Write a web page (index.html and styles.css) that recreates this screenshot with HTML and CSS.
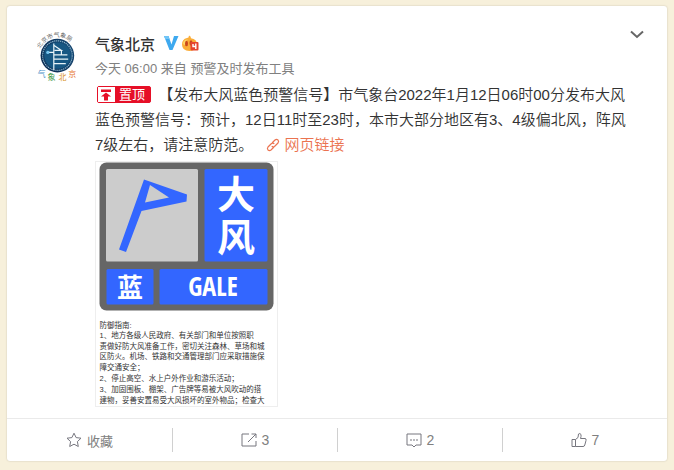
FILE: index.html
```html
<!DOCTYPE html>
<html lang="zh-CN">
<head>
    <meta charset="UTF-8">
    <meta name="viewport" content="width=device-width, initial-scale=1.0">
    <title>气象北京</title>
    <link rel="stylesheet" href="styles.css">
</head>
<body>
    <article class="card">
        <div class="card-main">
            <a href="#" class="avatar" aria-label="气象北京">
                <svg viewBox="0 0 100 130" width="40" height="52">
                    <defs>
                        <path id="arcTop" d="M9 47 A46 46 0 0 1 95 47"/>
                        <radialGradient id="globe" cx="0.6" cy="0.45" r="0.6">
                            <stop offset="0" stop-color="#1f6c9c"/>
                            <stop offset="1" stop-color="#0c2b52"/>
                        </radialGradient>
                    </defs>
                    <text class="logo-top"><textPath href="#arcTop">北京市气象局</textPath></text>
                    <circle cx="51" cy="64" r="42" fill="url(#globe)"/>
                    <circle cx="51" cy="64" r="37" fill="none" stroke="#8fb8ce" stroke-width="3" stroke-dasharray="3 2"/>
                    <circle cx="51" cy="64" r="33" fill="#175783"/>
                    <path d="M42 34V100M42 38L61 51H44M43 62H76M43 73H78M43 84H72M61 51V61M27 56H42" fill="none" stroke="#e8f3f8" stroke-width="3"/>
                    <circle cx="27" cy="56" r="4" fill="#76c4ee"/>
                    <g class="logo-bottom">
                        <text x="2" y="118" fill="#4a8fc9">气</text>
                        <text x="26" y="126" fill="#479a4c">象</text>
                        <text x="54" y="126" fill="#d8901f">北</text>
                        <text x="78" y="118" fill="#e5742c">京</text>
                    </g>
                </svg>
            </a>

            <div class="content">
                <header class="card-head">
                    <a href="#" class="name">气象北京</a>
                    <svg class="verified" viewBox="0 0 16 16" width="16" height="16">
                        <path d="M1 1H5.500L8.500 9.500 11 1H15.500L9.500 15H6.500Z" fill="#3ea9ef"/>
                        <path d="M1 1H5.500L6.500 4H2.200Z" fill="#70c5f7"/>
                    </svg>
                    <svg class="medal" viewBox="0 0 18 17" width="18" height="17">
                        <path d="M6 3Q8 3 8 0.500 10 1 10 3.200 16 4 16 9.500 16 16 8.500 16 1 16 1 9.500 1 4 6 3Z" fill="#fbad38"/>
                        <path d="M2 8Q3 4 7 4.500 4 6 4 10 2 10 2 8Z" fill="#fdd568"/>
                        <ellipse cx="5.500" cy="8.500" rx="1.500" ry="2.800" fill="#c9471c"/>
                        <ellipse cx="10" cy="8" rx="1.500" ry="2.800" fill="#c9471c"/>
                        <rect x="9.500" y="7" width="8" height="8.500" rx="1" fill="#e5442d"/>
                        <path d="M12 9V11.500H15M14.800 8.500V14" fill="none" stroke="#fff" stroke-width="1.400"/>
                    </svg>
                    <button class="more" aria-label="更多">
                        <svg viewBox="0 0 14 9" width="14" height="9">
                            <path d="M1 1.500L7 7 13 1.500" fill="none" stroke="#666" stroke-width="2"/>
                        </svg>
                    </button>
                </header>

                <p class="from">
                    <a href="#">今天 06:00</a> 来自 <a href="#">预警及时发布工具</a>
                </p>

                <p class="text">
                    <span class="pin"><span class="pin-icon"><svg viewBox="0 0 12 12" width="12" height="12"><path d="M1 0.500H11V3H1ZM6 3.500L11 7.500H8V11.500H4V7.500H1Z" fill="#e60f27"/></svg></span>置顶</span>
                    【发布大风蓝色预警信号】市气象台2022年1月12日06时00分发布大风蓝色预警信号：预计，12日11时至23时，本市大部分地区有3、4级偏北风，阵风7级左右，请注意防范。
                    <a href="#" class="link"><svg viewBox="0 0 14 14" width="14" height="14"><path d="M6 5L9 2Q10.500 0.800 12 2 13.200 3.500 12 5L8.500 8.500Q7 9.500 5.700 8.300M8 9L5 12Q3.500 13.200 2 12 0.800 10.500 2 9L5.500 5.500Q7 4.500 8.300 5.700" fill="none" stroke="#eb7350" stroke-width="1.200"/></svg>网页链接</a>
                </p>

                <a href="#" class="picture">
                    <svg viewBox="0 0 362 488" width="181" height="244">
                        <rect x="7" y="1" width="348" height="296" rx="14" fill="#666"/>
                        <rect x="20" y="14" width="184" height="185" rx="3" fill="#ccc"/>
                        <g fill="#36f">
                            <rect x="217" y="14" width="126" height="185" rx="3"/>
                            <rect x="21" y="214" width="94" height="71" rx="3"/>
                            <rect x="127" y="214" width="216" height="71" rx="3"/>
                            <path fill-rule="evenodd" d="M96 35L182 65 181 79 91 98 60 180 46 175ZM108 46L98 81 146 71Z"/>
                        </g>
                        <g class="sign">
                            <text x="280" y="92" font-size="76">大</text>
                            <text x="280" y="178" font-size="76">风</text>
                            <text x="68" y="269" font-size="52">蓝</text>
                            <text x="234" y="268" font-size="52" class="gale">GALE</text>
                        </g>
                        <g class="guide">
                            <text x="7" y="331">防御指南:</text>
                            <text x="7" y="351">1、地方各级人民政府、有关部门和单位按照职</text>
                            <text x="7" y="373">责做好防大风准备工作，密切关注森林、草场和城</text>
                            <text x="7" y="394">区防火。机场、铁路和交通管理部门应采取措施保</text>
                            <text x="7" y="416">障交通安全；</text>
                            <text x="7" y="438">2、停止高空、水上户外作业和游乐活动；</text>
                            <text x="7" y="460">3、加固围板、棚架、广告牌等易被大风吹动的搭</text>
                            <text x="7" y="482">建物，妥善安置易受大风损坏的室外物品；检查大</text>
                        </g>
                    </svg>
                </a>
            </div>
        </div>

        <footer class="actions">
            <button class="action">
                <svg viewBox="0 0 16 16" width="16" height="16"><path d="M8 1.200L10.100 5.600 15 6.200 11.400 9.600 12.300 14.500 8 12.200 3.700 14.500 4.600 9.600 1 6.200 5.900 5.600Z"/></svg>
                收藏
            </button>
            <button class="action">
                <svg viewBox="0 0 16 16" width="16" height="16"><path d="M8 2H1V14H15V9M10.500 2H15V6M15 2L7 10"/></svg>
                <span class="count">3</span>
            </button>
            <button class="action">
                <svg viewBox="0 0 16 16" width="16" height="16"><path d="M1 2H15V13H10L8 15 6 13H1Z"/><path d="M4 8H6M7 8H9M10 8H12"/></svg>
                <span class="count">2</span>
            </button>
            <button class="action">
                <svg viewBox="0 0 16 16" width="16" height="16"><path d="M1 7.500H4.500V14.500H1ZM4.500 7.500L7 5.500 7.500 2Q9 0.800 10 2.500 10.300 4.500 9.500 6.500H14Q15.500 6.500 15 8.500L13.800 13Q13.500 14.500 12 14.500H4.500"/></svg>
                <span class="count">7</span>
            </button>
        </footer>
    </article>
</body>
</html>
```

FILE: styles.css
```css
body {
    margin: 0;
    padding: 6px 7px 8px;
    background: #f7f0db;
    color: #333;
    font-family: "Liberation Sans", "Noto Sans CJK SC", sans-serif;
    font-size: 15px;
}

a {
    color: inherit;
    text-decoration: none;
}

button {
    padding: 0;
    border: none;
    background: none;
    font-family: inherit;
    cursor: pointer;
}

p {
    margin: 0;
}

svg {
    display: block;
    flex: none;
}

.card {
    background: #fff;
    border-radius: 3px;
    box-shadow: 0 0 2px rgba(0, 0, 0, 0.2);
}

.card-main {
    display: flex;
    gap: 18px;
    padding: 24px 23px 11px 30px;
}

.avatar {
    flex: none;
}

.logo-top {
    fill: #666;
    font-size: 15px;
}

.logo-bottom {
    font-size: 20px;
}

.content {
    flex: 1;
    min-width: 0;
}

.card-head {
    display: flex;
    align-items: center;
    height: 26px;
}

.name {
    font-weight: 500;
}

.verified {
    margin-left: 8px;
}

.medal {
    margin-left: 2px;
}

.more {
    margin-left: auto;
    align-self: flex-start;
}

.from {
    color: #808080;
    font-size: 13px;
    line-height: 26px;
}

.text {
    padding-right: 11px;
    font-weight: 350;
    line-height: 25px;
}

.pin {
    display: inline-flex;
    align-items: center;
    gap: 4px;
    box-sizing: border-box;
    height: 17px;
    margin: 0 3px 0 2px;
    padding-right: 5px;
    border: 1px solid #e60f27;
    border-radius: 2px;
    background: #e60f27;
    color: #fff;
    font-size: 13px;
    font-weight: 400;
    line-height: 15px;
    vertical-align: -2px;
}

.pin-icon {
    padding: 2px 3px 1px 2px;
    background: #fff;
}

.link {
    margin-left: 8px;
    color: #eb7350;
}

.link svg {
    display: inline-block;
    margin-right: 5px;
    vertical-align: -2px;
}

.picture {
    display: inline-block;
    margin-top: 4px;
    border: 1px solid #eee;
    vertical-align: top;
}

.sign {
    fill: #fff;
    font-weight: bold;
    text-anchor: middle;
}

.gale {
    font-family: "Liberation Sans Narrow", "Open Sans Condensed", "DejaVu Sans Condensed", sans-serif;
}

.guide {
    fill: #333;
    font-size: 15px;
}

.actions {
    display: grid;
    grid-template-columns: repeat(4, 1fr);
    padding: 9px 0;
    border-top: 1px solid #eaeaea;
}

.action {
    display: flex;
    align-items: center;
    justify-content: center;
    gap: 5px;
    height: 24px;
    color: #808080;
    font-size: 13px;
}

.action + .action {
    border-left: 1px solid #d0d0d0;
}

.action svg {
    fill: none;
    stroke: #77777f;
    stroke-width: 1;
}

.count {
    font-size: 14px;
}
```
